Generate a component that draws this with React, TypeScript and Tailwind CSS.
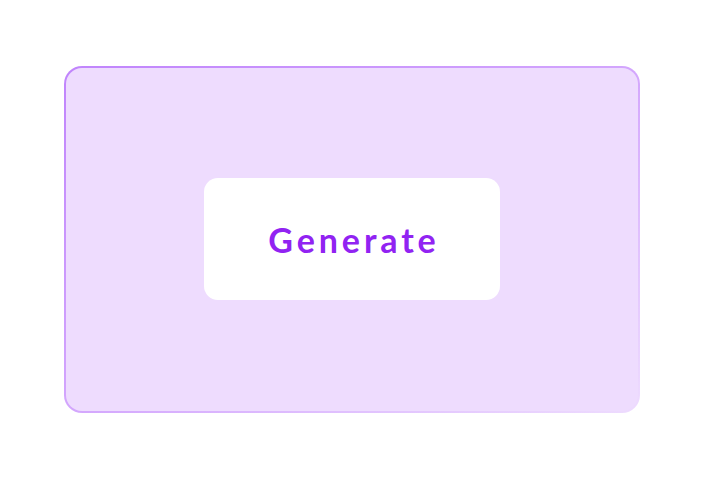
import React from "react";

export default function App() {
  return (
    <div className="w-full h-screen bg-white flex items-center justify-center">
      {/* gradient border wrapper */}
      <div className="w-[576px] h-[347px] mb-[2px] rounded-[18px] p-[2px] bg-gradient-to-br from-[#c084fc] via-[#d3a6fd] to-[#eedcfe]">
        <div className="w-full h-full rounded-[16px] bg-[#eedcfe] flex items-center justify-center">
          <button
            className="w-[296px] h-[122px] rounded-[14px] bg-white text-[#9123f2] font-bold text-[34px] tracking-[0.115em] pl-[4px] cursor-pointer"
            style={{ fontFamily: "Lato, 'Noto Sans', sans-serif" }}
          >
            Generate
          </button>
        </div>
      </div>
    </div>
  );
}
